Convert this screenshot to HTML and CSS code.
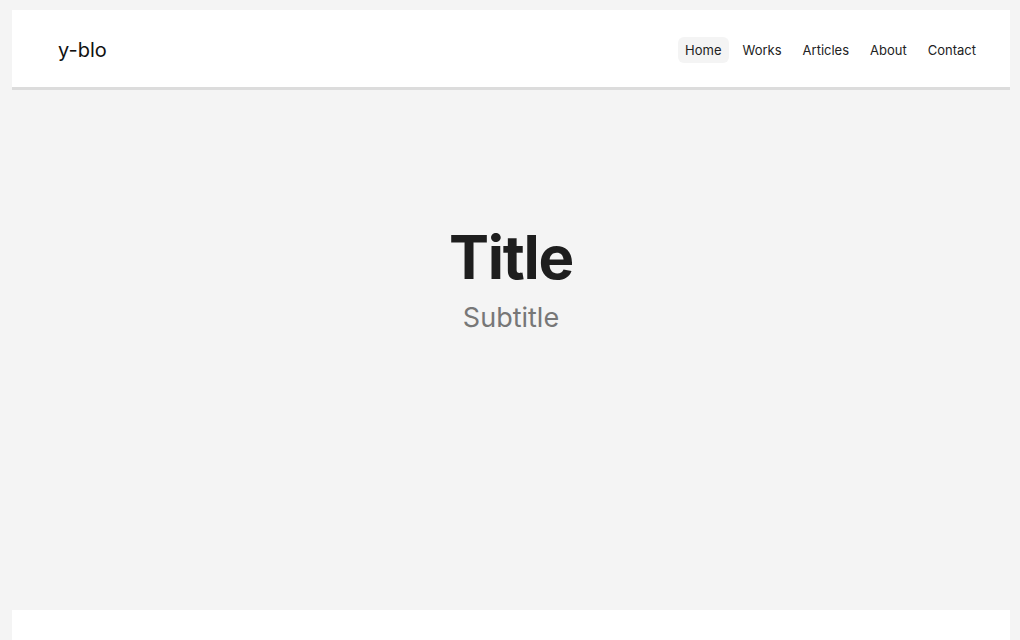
FILE: index.html
```html
<!DOCTYPE html>
<html lang="en">
<head>
<meta charset="utf-8">
<title>y-blo</title>
<link rel="stylesheet" href="styles.css">
</head>
<body>
<header class="site-header">
  <a class="logo" href="#">y-blo</a>
  <nav class="nav">
    <a class="nav-link active" href="#">Home</a>
    <a class="nav-link" href="#">Works</a>
    <a class="nav-link" href="#">Articles</a>
    <a class="nav-link" href="#">About</a>
    <a class="nav-link" href="#">Contact</a>
  </nav>
</header>
<main class="hero">
  <h1 class="title">Title</h1>
  <p class="subtitle">Subtitle</p>
</main>
<footer class="site-footer"></footer>
</body>
</html>
```

FILE: styles.css
```css
* { box-sizing: border-box; }
html, body { margin: 0; }
body {
  background: #f4f4f4;
  padding: 10px 10px 0 12px;
  font-family: Inter, "Noto Sans", sans-serif;
  color: #1e1e1e;
}
.site-header {
  height: 80px;
  background: #fff;
  border-bottom: 3px solid #dcdcdc;
  display: flex;
  align-items: center;
  justify-content: space-between;
  padding: 3px 27px 0 46px;
}
.logo {
  font-size: 20px;
  color: #111;
  text-decoration: none;
}
.nav {
  display: flex;
  gap: 7px;
}
.nav-link {
  font-size: 13px;
  color: #222;
  text-decoration: none;
  padding: 0 7px;
  height: 26px;
  line-height: 26px;
  border-radius: 6px;
}
.nav-link.active { background: #f4f4f4; }
.hero {
  height: 520px;
  padding-top: 131px;
  text-align: center;
}
.title {
  margin: 0;
  font-size: 60px;
  line-height: 72px;
  font-weight: 700;
  letter-spacing: -0.022em;
  color: #1e1e1e;
}
.subtitle {
  margin: 8px 0 0;
  font-size: 27px;
  line-height: 33px;
  color: #777;
}
.site-footer {
  height: 60px;
  background: #fff;
}
```
